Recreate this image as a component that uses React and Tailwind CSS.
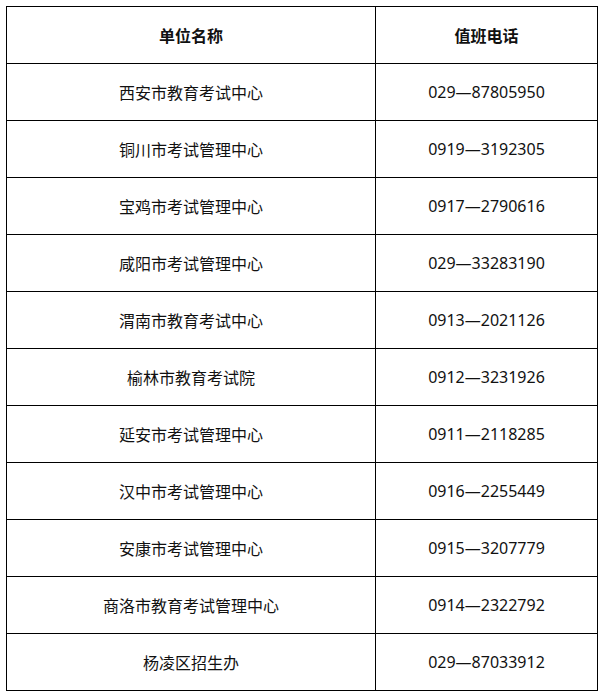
import React from 'react';

const rows = [
  ['西安市教育考试中心', '029—87805950'],
  ['铜川市考试管理中心', '0919—3192305'],
  ['宝鸡市考试管理中心', '0917—2790616'],
  ['咸阳市考试管理中心', '029—33283190'],
  ['渭南市教育考试中心', '0913—2021126'],
  ['榆林市教育考试院', '0912—3231926'],
  ['延安市考试管理中心', '0911—2118285'],
  ['汉中市考试管理中心', '0916—2255449'],
  ['安康市考试管理中心', '0915—3207779'],
  ['商洛市教育考试管理中心', '0914—2322792'],
  ['杨凌区招生办', '029—87033912'],
];

export default function App() {
  return (
    <div className="bg-white w-[610px] h-[699px] pt-[6px] pl-[6px] font-['Microsoft_YaHei','Noto_Sans_CJK_SC',sans-serif] text-[16px] text-[#111]">
      <table className="border-collapse w-[591px] table-fixed">
        <colgroup>
          <col className="w-[369px]" />
          <col className="w-[222px]" />
        </colgroup>
        <thead>
          <tr className="h-[57px]">
            <th className="border border-black font-bold text-center align-middle">单位名称</th>
            <th className="border border-black font-bold text-center align-middle">值班电话</th>
          </tr>
        </thead>
        <tbody>
          {rows.map(([name, phone]) => (
            <tr key={name} className="h-[57px]">
              <td className="border border-black text-center align-middle">{name}</td>
              <td className="border border-black text-center align-middle font-['Noto_Sans','Noto_Sans_CJK_SC',sans-serif]">{phone}</td>
            </tr>
          ))}
        </tbody>
      </table>
    </div>
  );
}
